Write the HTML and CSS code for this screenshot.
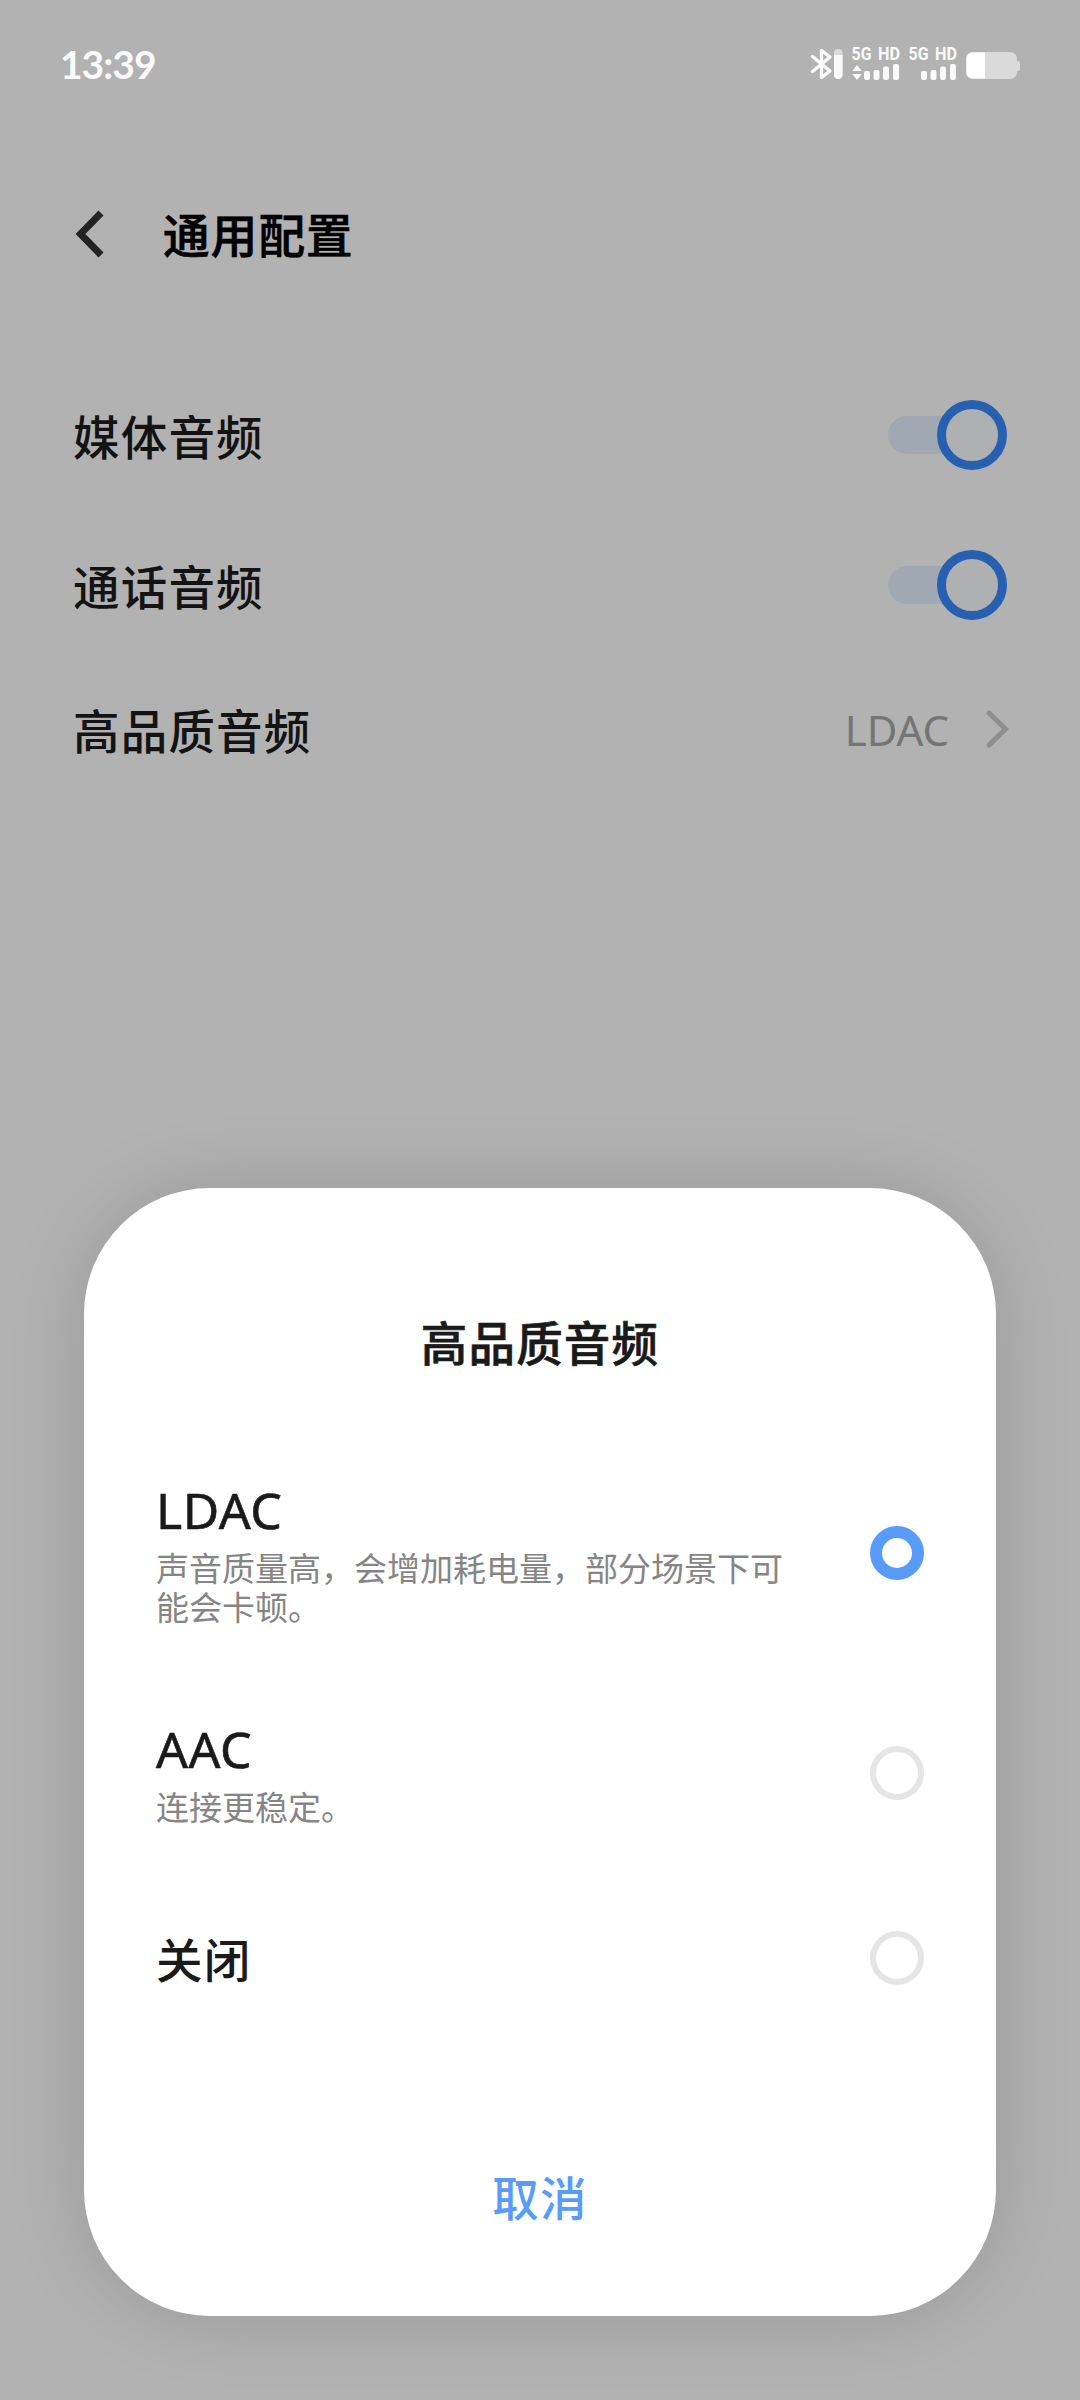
FILE: index.html
```html
<!DOCTYPE html>
<html lang="zh-CN">
<head>
    <meta charset="UTF-8">
    <meta name="viewport" content="width=device-width, initial-scale=1.0">
    <title>通用配置</title>
    <link rel="stylesheet" href="styles.css">
</head>
<body>
    <div class="status-bar">
        <span class="time">13:39</span>
        <svg class="status-icons" width="212" height="60" viewBox="809 34 212 60">
            <!-- bluetooth -->
            <path d="M812.500 56.500L830 71L821.500 77.500V50.500L830 57L812.500 71.500" fill="none" stroke="#fafafa" stroke-width="3.400" stroke-linecap="round" stroke-linejoin="round"/>
            <rect x="834" y="49" width="8.500" height="30" rx="4" fill="#dadada"/>
            <path d="M834 55h8.500v20a4.250 4 0 0 1-8.500 0z" fill="#fafafa"/>
            <!-- sim 1 -->
            <g class="signal">
                <text x="851.500" y="60" textLength="20" lengthAdjust="spacingAndGlyphs">5G</text>
                <text x="878" y="60" textLength="22" lengthAdjust="spacingAndGlyphs">HD</text>
                <path d="M857 65l4.700 6h-9.400zM857 80l4.700-6h-9.400z"/>
                <rect x="864" y="71" width="6" height="9" rx="2"/>
                <rect x="873.500" y="70" width="6" height="10" rx="2"/>
                <rect x="883" y="66.500" width="6" height="13.500" rx="2"/>
                <rect x="893" y="64" width="6" height="16" rx="2"/>
            </g>
            <!-- sim 2 -->
            <g class="signal">
                <text x="908.500" y="60" textLength="20" lengthAdjust="spacingAndGlyphs">5G</text>
                <text x="935" y="60" textLength="22" lengthAdjust="spacingAndGlyphs">HD</text>
                <rect x="921" y="71" width="6" height="9" rx="2"/>
                <rect x="930.500" y="70" width="6" height="10" rx="2"/>
                <rect x="940" y="66.500" width="6" height="13.500" rx="2"/>
                <rect x="950" y="64" width="6" height="16" rx="2"/>
            </g>
            <!-- battery -->
            <rect x="966" y="52" width="51" height="27" rx="6.500" fill="#dadada"/>
            <path d="M1017 61h1a2 2 0 0 1 2 2v6a2 2 0 0 1-2 2h-1z" fill="#dadada"/>
            <path d="M985 52.500h-12.500a6 6 0 0 0-6 6v14a6 6 0 0 0 6 6h12.500z" fill="#fff"/>
        </svg>
    </div>

    <div class="header">
        <svg class="back" width="32" height="50" viewBox="0 0 32 50">
            <path d="M27 4L6.500 25L27 46" fill="none" stroke="#232323" stroke-width="7"/>
        </svg>
        <h1>通用配置</h1>
    </div>

    <div class="settings">
        <div class="row">
            <span class="label">媒体音频</span>
            <div class="switch"><div class="thumb"></div></div>
        </div>
        <div class="row">
            <span class="label">通话音频</span>
            <div class="switch"><div class="thumb"></div></div>
        </div>
        <div class="row row-link">
            <span class="label">高品质音频</span>
            <div class="value">
                <span>LDAC</span>
                <svg width="24" height="40" viewBox="0 0 24 40">
                    <path d="M4 4L20.500 20L4 36" fill="none" stroke="#8e8e8e" stroke-width="5" stroke-linecap="round"/>
                </svg>
            </div>
        </div>
    </div>

    <div class="dialog">
        <h2>高品质音频</h2>
        <div class="option option-ldac">
            <div class="option-text">
                <div class="name">LDAC</div>
                <div class="desc">声音质量高，会增加耗电量，部分场景下可能会卡顿。</div>
            </div>
            <div class="radio checked"></div>
        </div>
        <div class="option option-aac">
            <div class="option-text">
                <div class="name">AAC</div>
                <div class="desc">连接更稳定。</div>
            </div>
            <div class="radio"></div>
        </div>
        <div class="option option-off">
            <div class="option-text">
                <div class="name-cn">关闭</div>
            </div>
            <div class="radio"></div>
        </div>
        <div class="cancel">取消</div>
    </div>
</body>
</html>
```
FILE: styles.css
```css
* {
    box-sizing: border-box;
}
body {
    margin: 0;
    width: 1080px;
    height: 2400px;
    position: relative;
    overflow: hidden;
    background-color: #b2b2b2;
    font-family: "Noto Sans", "Noto Sans CJK SC", sans-serif;
    color: #131313;
}
.status-bar {
    display: flex;
    justify-content: space-between;
    align-items: center;
    height: 128px;
    padding: 0 59px 0 60px;
}
.time {
    font-family: Lato, sans-serif;
    font-size: 39px;
    font-weight: 700;
    line-height: 40px;
    letter-spacing: -1px;
    color: #fafafa;
}
.status-icons {
    display: block;
}
.signal {
    fill: #fafafa;
    font-family: Roboto, sans-serif;
    font-size: 18px;
    font-weight: 700;
}
.header {
    display: flex;
    align-items: center;
    height: 212px;
    padding-left: 74px;
}
.header h1 {
    margin: 0 0 0 57px;
    padding-top: 2px;
    font-size: 46.5px;
    font-weight: 500;
    line-height: 60px;
    letter-spacing: 1.2px;
    color: #000;
    -webkit-text-stroke: 0.7px #000;
}
.settings {
    padding: 20px 73px 0;
}
.row {
    display: flex;
    justify-content: space-between;
    align-items: center;
    height: 150px;
    font-size: 46.5px;
    font-weight: 500;
    line-height: 60px;
    letter-spacing: 1.2px;
}
.row-link {
    height: 138px;
    margin-right: -2px;
}
.label {
    padding-top: 4px;
}
.switch {
    display: flex;
    align-items: center;
    justify-content: flex-end;
    width: 119px;
    height: 38px;
    border-radius: 19px;
    background-color: #a0a9b3;
}
.thumb {
    flex: none;
    width: 70px;
    height: 70px;
    border: 9px solid #2860b1;
    border-radius: 50%;
    background-color: #afb0b1;
}
.value {
    display: flex;
    align-items: center;
    gap: 36px;
    font-size: 42px;
    font-weight: 400;
    letter-spacing: 0;
    color: #757575;
}
.value span {
    padding-top: 1px;
}
.dialog {
    position: absolute;
    top: 1188px;
    left: 84px;
    width: 912px;
    height: 1128px;
    padding: 114px 72px 0;
    border-radius: 126px;
    background-color: #fff;
    box-shadow: 0 0 76px rgba(0, 0, 0, 0.15);
    color: #1a1a1a;
}
.dialog h2 {
    margin: 0;
    padding-top: 2px;
    font-size: 46.5px;
    font-weight: 500;
    line-height: 78px;
    letter-spacing: 1.2px;
    text-align: center;
    -webkit-text-stroke: 0.7px #1a1a1a;
}
.option {
    display: flex;
    justify-content: space-between;
    align-items: center;
}
.option-text {
    width: 640px;
}
.option-ldac {
    height: 342px;
}
.option-aac {
    height: 98px;
}
.option-off {
    height: 272px;
}
.name {
    margin-bottom: 9px;
    font-size: 50px;
    line-height: 60px;
    letter-spacing: 0.5px;
    -webkit-text-stroke: 0.6px #1a1a1a;
}
.name-cn {
    padding-top: 4px;
    font-size: 46.5px;
    font-weight: 500;
    line-height: 60px;
    letter-spacing: 1.2px;
}
.desc {
    font-size: 33px;
    line-height: 39px;
    color: #858585;
}
.radio {
    flex: none;
    width: 54px;
    height: 54px;
    border: 6px solid #e5e5e5;
    border-radius: 50%;
}
.radio.checked {
    border: 12px solid #589bf8;
}
.cancel {
    margin-top: 74px;
    font-size: 46.5px;
    font-weight: 500;
    line-height: 60px;
    letter-spacing: 1.2px;
    text-align: center;
    color: #589bf8;
}
```
